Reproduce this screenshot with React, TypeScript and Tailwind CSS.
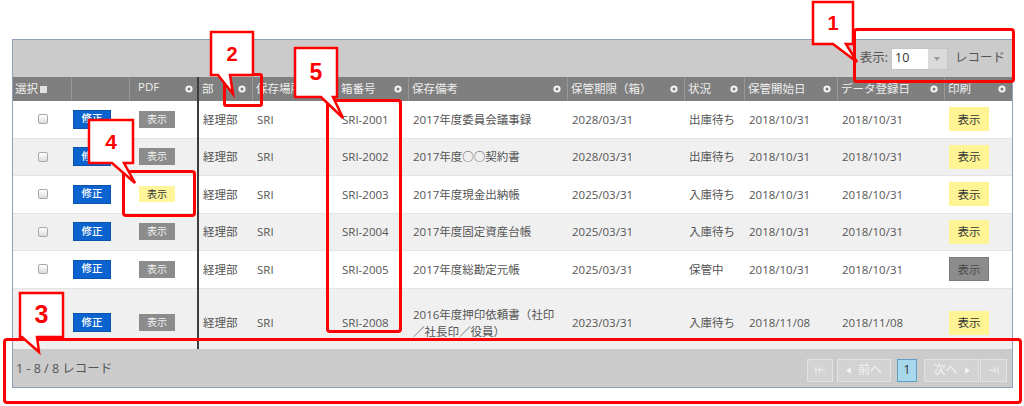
import React from 'react'

type Row = {
  box: string
  remark: string
  limit: string
  status: string
  start: string
  reg: string
  pdf: 'grey' | 'yellow'
  print: 'grey' | 'yellow'
}

const rows: Row[] = [
  { box: 'SRI-2001', remark: '2017年度委員会議事録', limit: '2028/03/31', status: '出庫待ち', start: '2018/10/31', reg: '2018/10/31', pdf: 'grey', print: 'yellow' },
  { box: 'SRI-2002', remark: '2017年度○○契約書', limit: '2028/03/31', status: '出庫待ち', start: '2018/10/31', reg: '2018/10/31', pdf: 'grey', print: 'yellow' },
  { box: 'SRI-2003', remark: '2017年度現金出納帳', limit: '2025/03/31', status: '入庫待ち', start: '2018/10/31', reg: '2018/10/31', pdf: 'yellow', print: 'yellow' },
  { box: 'SRI-2004', remark: '2017年度固定資産台帳', limit: '2025/03/31', status: '入庫待ち', start: '2018/10/31', reg: '2018/10/31', pdf: 'grey', print: 'yellow' },
  { box: 'SRI-2005', remark: '2017年度総勘定元帳', limit: '2025/03/31', status: '保管中', start: '2018/10/31', reg: '2018/10/31', pdf: 'grey', print: 'grey' },
  { box: 'SRI-2008', remark: '2016年度押印依頼書（社印\n／社長印／役員）', limit: '2023/03/31', status: '入庫待ち', start: '2018/11/08', reg: '2018/11/08', pdf: 'grey', print: 'yellow' },
]

const cols = [
  { key: 'bu', label: '部', w: 'w-[54px]' },
  { key: 'loc', label: '保存場所', w: 'w-[85px]' },
  { key: 'box', label: '箱番号', w: 'w-[71px]' },
  { key: 'remark', label: '保存備考', w: 'w-[159px]' },
  { key: 'limit', label: '保管期限（箱）', w: 'w-[117px]' },
  { key: 'status', label: '状況', w: 'w-[60px]' },
  { key: 'start', label: '保管開始日', w: 'w-[93px]' },
  { key: 'reg', label: 'データ登録日', w: 'w-[107px]' },
  { key: 'print', label: '印刷', w: 'w-[67px]' },
]

function HeadDot() {
  return (
    <svg width="8" height="8" viewBox="0 0 8 8" className="shrink-0">
      <circle cx="4" cy="4" r="3.6" fill="#f4f4f4" />
      <circle cx="4" cy="4" r="1.5" fill="#7d7d7d" />
    </svg>
  )
}

function rowBg(i: number) {
  return i % 2 === 1 ? 'bg-[#f0f0f0]' : 'bg-white'
}

// last row holds a two-line remark, so it is taller and gets cut by the footer
function rowH(i: number) {
  return i === 5 ? 'h-[68px]' : 'h-[37.5px] border-b border-[#e4e4e4]'
}

function Frozen() {
  return (
    <div className="flex flex-col">
      {/* header */}
      <div className="flex h-[24px] bg-[#7f7f7f] text-[#eeeeee] text-[11.5px]">
        <div className="w-[59px] flex items-center pl-[2px] gap-[2px] border-r border-[#999]">
          <span>選択</span>
          <span className="w-[7px] h-[7px] bg-[#e2e2e2]" />
        </div>
        <div className="w-[58px] border-r border-[#999]" />
        <div className="w-[67px] flex items-center justify-between pl-[7px] pr-[4px]">
          <span className="mb-[4px] ml-[1px]">PDF</span>
          <HeadDot />
        </div>
      </div>
      {/* body */}
      <div className="h-[248px] overflow-hidden bg-[#f0f0f0]">
        {rows.map((r, i) => (
          <div key={r.box} className={`flex items-center ${rowH(i)} ${rowBg(i)}`}>
            <div className="w-[59px] flex justify-center">
              <span className="w-[10px] h-[10px] rounded-[2px] border border-[#a8a8a8] bg-gradient-to-b from-white to-[#dcdcdc]" />
            </div>
            <div className="w-[58px] pl-[1px]">
              <div className="w-[38px] h-[19px] bg-[#0b63cf] border border-[#0a52ab] text-white text-[10.5px] font-medium flex items-center justify-center">
                修正
              </div>
            </div>
            <div className="w-[67px] pl-[9px]">
              {r.pdf === 'yellow' ? (
                <div className="w-[36px] h-[16px] bg-[#fff59a] text-[#333] text-[10px] flex items-center justify-center">表示</div>
              ) : (
                <div className="w-[36px] h-[17px] bg-[#8c8c8c] text-[#f2f2f2] text-[10px] flex items-center justify-center">表示</div>
              )}
            </div>
          </div>
        ))}
      </div>
    </div>
  )
}

function cellValue(r: Row, key: string) {
  switch (key) {
    case 'bu':
      return '経理部'
    case 'loc':
      return 'SRI'
    case 'box':
      return r.box
    case 'remark':
      return r.remark
    case 'limit':
      return r.limit
    case 'status':
      return r.status
    case 'start':
      return r.start
    case 'reg':
      return r.reg
    default:
      return ''
  }
}

function Scroll() {
  return (
    <div className="flex flex-col">
      <div className="flex h-[24px] bg-[#7f7f7f] text-[#eeeeee] text-[11.5px]">
        {cols.map((c, i) => (
          <div
            key={c.key}
            className={`${c.w} flex items-center justify-between pl-[3px] pr-[6px] ${i < cols.length - 1 ? 'border-r border-[#999]' : ''}`}
          >
            <span className="whitespace-nowrap">{c.label}</span>
            <HeadDot />
          </div>
        ))}
      </div>
      <div className="h-[248px] overflow-hidden bg-[#f0f0f0]">
        {rows.map((r, i) => (
          <div key={r.box} className={`flex items-center ${rowH(i)} ${rowBg(i)} text-[#555] text-[11.5px]`}>
            {cols.map(c =>
              c.key === 'print' ? (
                <div key={c.key} className={`${c.w} pl-1`}>
                  {r.print === 'yellow' ? (
                    <div className="w-[40px] h-[24px] bg-[#fff493] text-[#333] flex items-center justify-center">表示</div>
                  ) : (
                    <div className="w-[40px] h-[24px] bg-[#8c8c8c] border border-[#7a7a7a] text-[#4a4a4a] flex items-center justify-center">表示</div>
                  )}
                </div>
              ) : (
                <div key={c.key} className={`${c.w} pl-1 whitespace-pre-line leading-[17px]`}>
                  {cellValue(r, c.key)}
                </div>
              ),
            )}
          </div>
        ))}
      </div>
    </div>
  )
}

function FirstIcon({ flip }: { flip?: boolean }) {
  return (
    <svg width="11" height="8" viewBox="0 0 11 8" className={flip ? 'rotate-180' : ''}>
      <path d="M1 0.5V7.5" stroke="#f2f2f2" strokeWidth="1" />
      <path d="M10 4H3M5.5 1.5L3 4l2.5 2.5" stroke="#f2f2f2" strokeWidth="1" fill="none" />
    </svg>
  )
}

function Tri({ right }: { right?: boolean }) {
  return (
    <svg width="5" height="7" viewBox="0 0 5 7">
      <path d={right ? 'M0 0L5 3.5L0 7Z' : 'M5 0L0 3.5L5 7Z'} fill="#f2f2f2" />
    </svg>
  )
}

function Grid() {
  return (
    <div className="ml-[12px] mt-[39px] w-[1001px] border border-[#8d9fbb] bg-white">
      {/* toolbar */}
      <div className="h-[37px] bg-[#cbcbcb] flex items-center justify-end pr-[7px] text-[12.5px] text-[#555]">
        <span>表示:</span>
        <div className="ml-[3px] flex h-[22px] border border-[#c4c4c4]">
          <div className="w-[36px] bg-white text-[#333] pl-[3px] flex items-center">10</div>
          <div className="w-[19px] bg-[#dadada] flex items-center justify-center">
            <svg width="6" height="4" viewBox="0 0 6 4">
              <path d="M0 0H6L3 4Z" fill="#9a9a9a" />
            </svg>
          </div>
        </div>
        <span className="ml-[7px]">レコード</span>
      </div>
      <div className="flex">
        <Frozen />
        <div className="w-[2px] bg-[#3c3c3c]" />
        <Scroll />
      </div>
      {/* footer */}
      <div className="h-[38px] bg-[#cbcbcb] flex items-center justify-between pl-[3px] pr-[5px] text-[12.5px] text-[#555]">
        <span className="mt-[3px]">1 - 8 / 8 レコード</span>
        <div className="flex items-center mt-[4px] text-[12px] text-[#f2f2f2]">
          <div className="w-[26px] h-[23px] bg-[#d3d3d3] border border-[#e2e2e2] flex items-center justify-center">
            <FirstIcon />
          </div>
          <div className="ml-[4px] w-[54px] h-[23px] bg-[#d3d3d3] border border-[#e2e2e2] flex items-center justify-center gap-[7px]">
            <Tri />
            <span>前へ</span>
          </div>
          <div className="ml-[6px] w-[20px] h-[23px] bg-[#a7d8eb] border border-[#5f9fc3] text-[#333] flex items-center justify-center">
            1
          </div>
          <div className="ml-[7px] w-[55px] h-[23px] bg-[#d3d3d3] border border-[#e2e2e2] flex items-center justify-center gap-[7px]">
            <span>次へ</span>
            <Tri right />
          </div>
          <div className="ml-[1px] w-[27px] h-[23px] bg-[#d3d3d3] border border-[#e2e2e2] flex items-center justify-center">
            <FirstIcon flip />
          </div>
        </div>
      </div>
    </div>
  )
}

const bubbles = [
  { n: '1', d: 'M813 2H853V44H846L857 62L833 44H813Z' },
  { n: '2', d: 'M211 32H253V75H230L233 94L218 75H211Z' },
  { n: '5', d: 'M295 48H337V97H333L343 118L321 97H295Z' },
  { n: '4', d: 'M89 120H133V163H124L135 183L112 163H89Z' },
  { n: '3', d: 'M20 293H63V337H37L39 352L22 337H20Z' },
]

export default function App() {
  return (
    <div className="relative w-[1024px] h-[406px] overflow-hidden bg-white font-['Open_Sans','Noto_Sans_CJK_JP',sans-serif]">
      <Grid />

      {/* highlight frames */}
      <div className="absolute left-[853px] top-[28px] w-[162px] h-[55px] border-[3px] border-[#ff0000] rounded-[4px]" />
      <div className="absolute left-[223px] top-[73px] w-[40px] h-[34px] border-[3px] border-[#ff0000] rounded-[3px]" />
      <div className="absolute left-[326px] top-[99px] w-[76px] h-[234px] border-[3px] border-[#ff0000] rounded-[4px]" />
      <div className="absolute left-[122px] top-[170px] w-[74px] h-[47px] border-[3px] border-[#ff0000] rounded-[4px]" />
      <div className="absolute left-[3px] top-[338px] w-[1019px] h-[66px] border-[3px] border-[#ff0000] rounded-[4px]" />

      {/* callout bubbles */}
      <svg className="absolute left-0 top-0 pointer-events-none" width="1024" height="406" viewBox="0 0 1024 406">
        {bubbles.map(b => (
          <path key={b.n} d={b.d} fill="white" stroke="#ff0000" strokeWidth="2.5" strokeLinejoin="miter" />
        ))}
      </svg>

      <div className="absolute left-[813px] top-[2px] w-[40px] h-[42px] flex items-center justify-center text-[#ff0000] font-bold text-[20px] font-['Liberation_Sans',sans-serif]">1</div>
      <div className="absolute left-[211px] top-[32px] w-[42px] h-[43px] flex items-center justify-center text-[#ff0000] font-bold text-[20px] font-['Liberation_Sans',sans-serif]">2</div>
      <div className="absolute left-[295px] top-[48px] w-[42px] h-[49px] flex items-center justify-center text-[#ff0000] font-bold text-[23px] font-['Liberation_Sans',sans-serif]">5</div>
      <div className="absolute left-[89px] top-[120px] w-[44px] h-[43px] flex items-center justify-center text-[#ff0000] font-bold text-[21px] font-['Liberation_Sans',sans-serif]">4</div>
      <div className="absolute left-[20px] top-[293px] w-[43px] h-[44px] flex items-center justify-center text-[#ff0000] font-bold text-[25px] font-['Liberation_Sans',sans-serif]">3</div>
    </div>
  )
}
